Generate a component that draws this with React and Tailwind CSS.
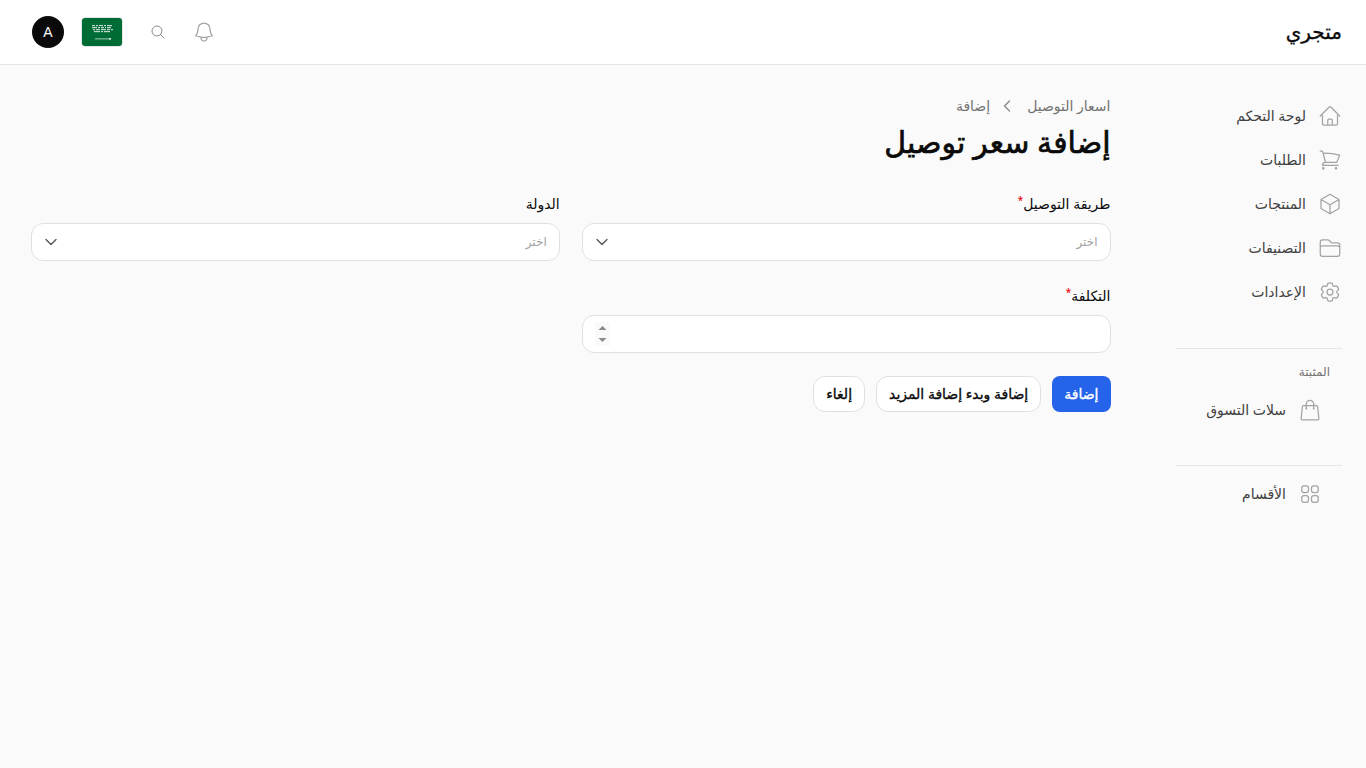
import {
  HiOutlineHome,
  HiOutlineShoppingCart,
  HiOutlineCube,
  HiOutlineFolder,
  HiOutlineCog6Tooth,
  HiOutlineShoppingBag,
  HiOutlineSquares2X2,
  HiOutlineBell,
  HiOutlineMagnifyingGlass,
  HiOutlineChevronDown,
  HiOutlineChevronLeft,
} from 'react-icons/hi2';

const navItems = [
  { label: 'لوحة التحكم', icon: HiOutlineHome },
  { label: 'الطلبات', icon: HiOutlineShoppingCart },
  { label: 'المنتجات', icon: HiOutlineCube },
  { label: 'التصنيفات', icon: HiOutlineFolder },
  { label: 'الإعدادات', icon: HiOutlineCog6Tooth },
];

// speckles standing in for the calligraphy on the flag
const flagSpeckles = [
  [10, 7, 3], [14, 7, 2], [17, 7, 4], [22, 7, 2], [25, 7, 5],
  [10, 9, 5], [16, 9, 2], [19, 9, 3], [23, 9, 1], [25, 9, 4],
  [11, 11, 2], [14, 11, 4], [19, 11, 5], [25, 11, 3], [29, 11, 2],
  [12, 13, 6], [19, 13, 2], [22, 13, 6],
];

function Flag() {
  return (
    <svg width="40" height="28" viewBox="0 0 40 28" className="block">
      <rect width="40" height="28" fill="#006c35" />
      {flagSpeckles.map(([x, y, w]) => (
        <rect key={`${x}-${y}`} x={x} y={y} width={w} height="1.2" fill="#ffffff" opacity="0.75" />
      ))}
      <rect x="13" y="20.5" width="16" height="0.8" fill="#ffffff" opacity="0.8" />
      <rect x="27" y="20" width="2" height="1.6" fill="#ffffff" opacity="0.7" />
    </svg>
  );
}

function Field({ label, required, children }) {
  return (
    <div className="flex flex-col gap-[7px]">
      <label className="text-sm leading-6 font-medium text-[#0a0a0a]">
        {label}
        {required && <sup className="text-[10px] text-red-600 font-medium">*</sup>}
      </label>
      {children}
    </div>
  );
}

function SelectBox() {
  return (
    <div className="h-[38px] bg-white border border-[#e0e0e0] rounded-xl flex items-center justify-between ps-3 pe-[11px]">
      <span className="text-xs text-[#a3a3a3]">اختر</span>
      <HiOutlineChevronDown className="w-4 h-4 text-[#555]" strokeWidth={2} />
    </div>
  );
}

export default function App() {
  return (
    <div dir="rtl" className="min-h-screen bg-[#fafafa] font-['Noto_Sans','DejaVu_Sans',sans-serif]">
      <header className="h-[65px] bg-white border-b border-[#e5e5e5] flex items-center justify-between ps-6 pe-8">
        <div className="text-xl font-medium text-[#0a0a0a] [-webkit-text-stroke:0.3px]">متجري</div>
        <div className="flex items-center">
          <HiOutlineBell className="w-6 h-6 text-[#a3a3a3]" strokeWidth={1.25} />
          <HiOutlineMagnifyingGlass className="w-4 h-4 text-[#737373] ms-[26px]" strokeWidth={1.25} />
          <div className="ms-[27px] rounded-sm overflow-hidden border border-[#e5e5e5]">
            <Flag />
          </div>
          <div className="ms-[17px] w-8 h-8 rounded-full bg-[#0a0a0a] text-white flex items-center justify-center text-sm font-['Liberation_Sans',sans-serif]">
            A
          </div>
        </div>
      </header>

      <div className="flex">
        <aside className="w-[190px] shrink-0 ps-6 pt-[35px]">
          <nav className="flex flex-col gap-[12px]">
            {navItems.map(({ label, icon: Icon }) => (
              <a key={label} className="h-8 flex items-center gap-[4px] text-sm text-[#404040]">
                <Icon className="w-[24px] h-[24px] text-[#a3a3a3]" strokeWidth={1.25} />
                <span className="ms-[8px]">{label}</span>
              </a>
            ))}
          </nav>
          <div className="mt-[40px] border-t border-[#e5e5e5] pt-[15px]">
            <div className="ps-3 text-xs font-medium leading-4 text-[#737373]">المثبتة</div>
            <a className="mt-[14px] ps-[20px] h-8 flex items-center gap-[4px] text-sm text-[#404040]">
              <HiOutlineShoppingBag className="w-[24px] h-[24px] text-[#a3a3a3]" strokeWidth={1.25} />
              <span className="ms-[8px]">سلات التسوق</span>
            </a>
          </div>
          <div className="mt-[39px] border-t border-[#e5e5e5] pt-[12px]">
            <a className="ps-[20px] h-8 flex items-center gap-[4px] text-sm text-[#404040]">
              <HiOutlineSquares2X2 className="w-[24px] h-[24px] text-[#a3a3a3]" strokeWidth={1.25} />
              <span className="ms-[8px]">الأقسام</span>
            </a>
          </div>
        </aside>

        <main className="flex-1 ps-[65.5px] pe-[31px] pt-[31px]">
          <div className="flex items-center gap-3 text-sm text-[#737373]">
            <span>اسعار التوصيل</span>
            <HiOutlineChevronLeft className="w-4 h-4 text-[#8a8a8a]" strokeWidth={2} />
            <span className="-ms-[3px]">إضافة</span>
          </div>
          <h1 className="mt-2 text-3xl font-normal text-[#0a0a0a] [-webkit-text-stroke:0.7px]">إضافة سعر توصيل</h1>

          <div className="mt-[32px] grid grid-cols-2 gap-x-[22px] gap-y-[23px]">
            <Field label="طريقة التوصيل" required>
              <SelectBox />
            </Field>
            <Field label="الدولة">
              <SelectBox />
            </Field>
            <Field label="التكلفة" required>
              <div className="h-[38px] bg-white border border-[#e0e0e0] rounded-xl flex items-center justify-end pe-[12px]">
                <svg width="15" height="24" viewBox="0 0 15 24" className="block">
                  <rect width="15" height="24" fill="#fafafa" />
                  <path d="M3.5 8 L7.5 4 L11.5 8 Z" fill="#8a8a8a" />
                  <path d="M3.5 16 L11.5 16 L7.5 20 Z" fill="#8a8a8a" />
                </svg>
              </div>
            </Field>
          </div>

          <div className="mt-[23px] flex gap-[11px] text-sm font-normal [-webkit-text-stroke:0.35px]">
            <button className="h-9 px-3 rounded-lg bg-[#2563eb] text-white">إضافة</button>
            <button className="h-9 px-3 rounded-xl bg-white border border-[#e0e0e0] text-[#0a0a0a]">إضافة وبدء إضافة المزيد</button>
            <button className="h-9 px-3 rounded-xl bg-white border border-[#e0e0e0] text-[#0a0a0a]">إلغاء</button>
          </div>
        </main>
      </div>
    </div>
  );
}
